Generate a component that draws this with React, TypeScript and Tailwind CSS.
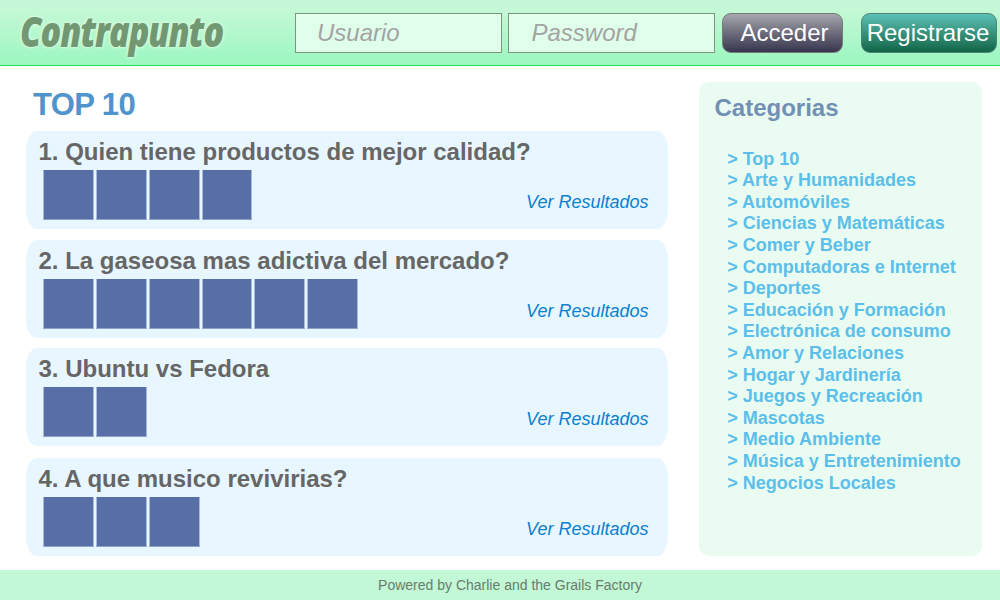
const polls = [
  { title: '1. Quien tiene productos de mejor calidad?', votes: 4, gap: 'mt-0' },
  { title: '2. La gaseosa mas adictiva del mercado?', votes: 6, gap: 'mt-[11px]' },
  { title: '3. Ubuntu vs Fedora', votes: 2, gap: 'mt-[10px]' },
  { title: '4. A que musico revivirias?', votes: 3, gap: 'mt-[12px]' },
];

const categories = [
  'Top 10',
  'Arte y Humanidades',
  'Automóviles',
  'Ciencias y Matemáticas',
  'Comer y Beber',
  'Computadoras e Internet',
  'Deportes',
  'Educación y Formación',
  'Electrónica de consumo',
  'Amor y Relaciones',
  'Hogar y Jardinería',
  'Juegos y Recreación',
  'Mascotas',
  'Medio Ambiente',
  'Música y Entretenimiento',
  'Negocios Locales',
];

function Header() {
  return (
    <header className="flex h-[66px] items-start border-b border-[#1de456] bg-linear-to-b from-[#c4f8d6] from-15% to-[#9ff7c2] to-90%">
      <div className="h-[65px] w-[295px] pl-[20px]">
        <h1 className="w-max origin-left scale-x-[0.795] font-['Open_Sans',sans-serif] text-[43px] leading-[62px] font-extrabold tracking-[-1.3px] text-[#729873] italic [text-shadow:0_0_4px_#e6ffe9,0_0_3px_#d9fbdc]">
          Contrapunto
        </h1>
      </div>
      <form className="mt-[13px] flex">
        <input
          aria-label="Usuario"
          placeholder="Usuario"
          className="h-[40px] w-[207px] border border-[#7d947f] bg-[#e0ffea] pl-[21px] text-[24px] italic placeholder:text-[#a3a3a3]"
        />
        <input
          aria-label="Password"
          placeholder="Password"
          type="text"
          className="ml-[6px] h-[40px] w-[207px] border border-[#7d947f] bg-[#e0ffea] pl-[22.5px] text-[24px] italic placeholder:text-[#a3a3a3]"
        />
        <button
          type="button"
          className="ml-[7px] h-[40px] w-[121px] rounded-[9px] border border-[#747b7c] bg-linear-to-b from-[#a7a8ac] to-[#38364e] pl-[4px] text-[24px] leading-[38px] text-white"
        >
          Acceder
        </button>
        <button
          type="button"
          className="ml-[18px] h-[40px] w-[136px] rounded-[9px] border border-[#4d8575] bg-linear-to-b from-[#5cc1b7] to-[#0f6647] pr-[2px] text-[24px] leading-[38px] text-white"
        >
          Registrarse
        </button>
      </form>
    </header>
  );
}

function Poll({ title, votes, gap }: { title: string; votes: number; gap: string }) {
  return (
    <article className={`${gap} flex h-[98px] w-[641.5px] flex-col rounded-[11px/20px] bg-[#e8f7ff] pt-[7px] pl-[13px]`}>
      <h3 className="-ml-[0.5px] text-[24px] leading-[28px] font-bold whitespace-nowrap text-[#666]">{title}</h3>
      <div className="mt-[4px] flex justify-between pr-[19px] pl-[4px]">
        <div className="flex gap-[2px]">
          {Array.from({ length: votes }, (_, i) => (
            <span key={i} className="h-[50px] w-[50.86px] border-x border-b border-x-[#a9b9db] border-b-[#8fa2cc] bg-[#586ea7]" />
          ))}
        </div>
        <a className="mt-[22px] text-[18px] leading-[20px] text-[#0b80d0] italic">Ver Resultados</a>
      </div>
    </article>
  );
}

export default function App() {
  return (
    <div className="flex h-[600px] w-[1000px] flex-col overflow-hidden bg-white font-['Liberation_Sans',Arial,sans-serif]">
      <Header />
      <main className="flex h-[504px] pl-[26px]">
        <section className="w-[673px] pt-[21px]">
          <h2 className="mb-[8px] pl-[7px] text-[31px] leading-[36px] font-bold tracking-[-0.6px] text-[#5094cc]">TOP 10</h2>
          {polls.map((poll) => (
            <Poll key={poll.title} {...poll} />
          ))}
        </section>
        <aside className="mt-[16px] h-[474px] w-[283px] rounded-[10px] bg-[#eafcf1] pt-[12px] pl-[15.5px]">
          <h2 className="text-[24px] leading-[28px] font-bold text-[#7090b4]">Categorias</h2>
          <ul className="mt-[26.65px] pl-[12.7px] text-[18px] leading-[21.6px] font-bold whitespace-nowrap text-[#5bbfea]">
            {categories.map((name) => (
              <li key={name}>&gt; {name}</li>
            ))}
          </ul>
        </aside>
      </main>
      <footer className="h-[30px] bg-[#c3f8d6] pl-[20px] text-center text-[14px] leading-[30px] text-[#687c6d]">
        Powered by Charlie and the Grails Factory
      </footer>
    </div>
  );
}
